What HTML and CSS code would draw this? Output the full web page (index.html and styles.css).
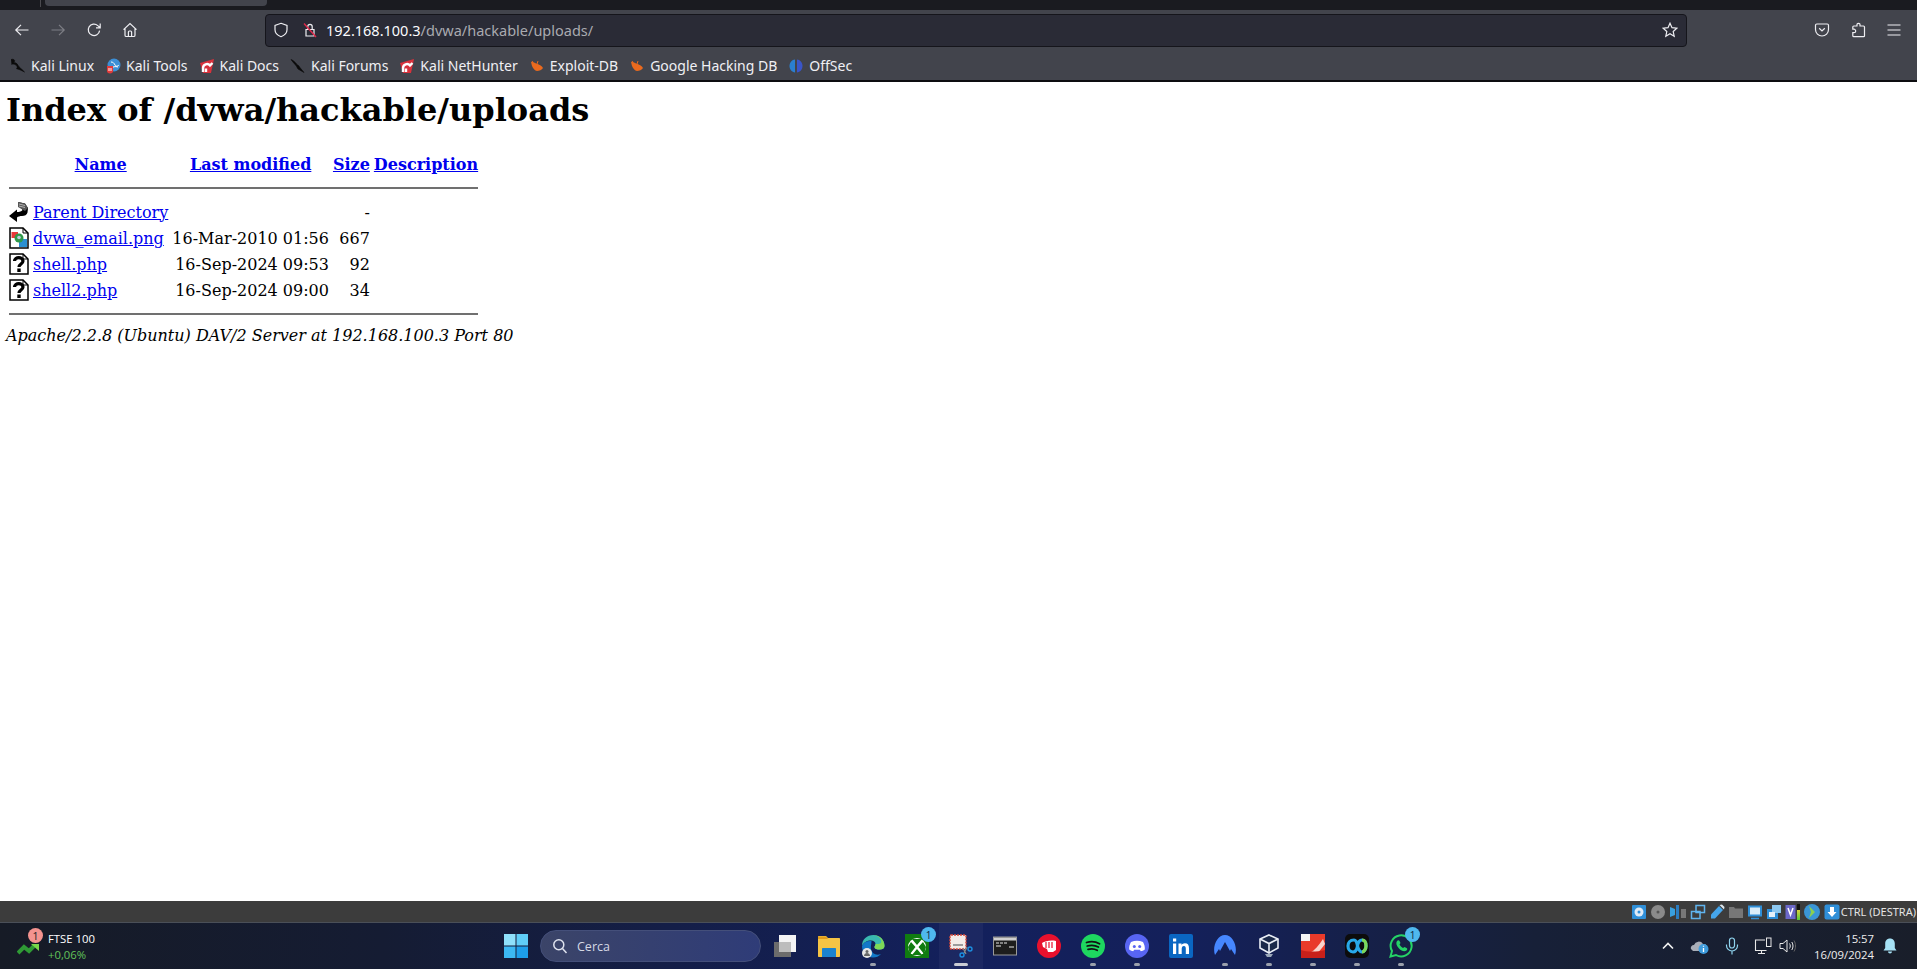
FILE: index.html
```html
<!DOCTYPE html>
<html lang="en">
<head>
  <meta charset="UTF-8" />
  <title>Index of /dvwa/hackable/uploads</title>
  <link rel="stylesheet" href="styles.css">
</head>
<body>

  <div class="tabstrip"><span class="tab-edge"></span><span class="tab"></span></div>

  <div class="toolbar">
    <button class="tool tool-back" aria-label="Back"><svg width="16" height="16" viewBox="0 0 16 16"><path d="M14.5 8H1.8M7 2.8 1.8 8 7 13.2"/></svg></button>
    <button class="tool tool-fwd" aria-label="Forward"><svg width="16" height="16" viewBox="0 0 16 16"><path d="M1.5 8h12.7M9 2.8 14.2 8 9 13.2"/></svg></button>
    <button class="tool tool-reload" aria-label="Reload"><svg width="16" height="16" viewBox="0 0 16 16"><path d="M13.6 8.6A5.7 5.7 0 1 1 11.8 3.6L14 5.6M14.2 1.6v4.2h-4.2"/></svg></button>
    <button class="tool tool-home" aria-label="Home"><svg width="16" height="16" viewBox="0 0 16 16"><path d="M1.5 7.6 8 1.6l6.5 6M3 6.6v6.6c0 .8.5 1.3 1.3 1.3h7.4c.8 0 1.3-.5 1.3-1.3V6.6M6.4 14.5V10c0-.6.4-1 1-1h1.2c.6 0 1 .4 1 1v4.5"/></svg></button>

    <div class="urlbar">
      <svg class="url-shield" width="16" height="16" viewBox="0 0 16 16"><path d="M8 1.3 14 3.4v4.4c0 3.4-3 5.8-6 6.9-3-1.1-6-3.5-6-6.9V3.4z"/></svg>
      <svg class="url-lock" width="16" height="16" viewBox="0 0 16 16"><path class="lock-body" d="M4 7.5h8V14H4zM5.8 7.5V4.6a2.2 2.2 0 0 1 4.4 0v2.9"/><path class="lock-slash" d="M2 1.500 14 15"/></svg>
      <span class="url-text"><span class="url-host">192.168.100.3</span>/dvwa/hackable/uploads/</span>
      <svg class="url-star" width="16" height="16" viewBox="0 0 16 16"><path d="M8 1.200 10 5.700l4.800.5-3.600 3.300 1 4.800L8 11.800l-4.200 2.500 1-4.800-3.600-3.300 4.800-.5z"/></svg>
    </div>

    <button class="tool tool-pocket" aria-label="Pocket"><svg width="16" height="16" viewBox="0 0 16 16"><path d="M2.800 2h10.400c.7 0 1.300.6 1.300 1.300V7.500a6.500 6.500 0 0 1-13 0V3.300C1.500 2.600 2.100 2 2.800 2zM5.200 6.300 8 9l2.800-2.700"/></svg></button>
    <button class="tool tool-ext" aria-label="Extensions"><svg width="16" height="16" viewBox="0 0 16 16"><path d="M8.500 1.300c1.200 0 1.700.9 1.500 2.200v.5h3.500c.6 0 1 .4 1 1v8.700c0 .6-.4 1-1 1H3.800c-.6 0-1-.4-1-1v-3h1c1.200 0 1.900-.7 1.900-1.500S5 7.200 3.800 7.200h-1V5c0-.6.4-1 1-1H7v-.5c-.2-1.300.3-2.200 1.500-2.200z"/></svg></button>
    <button class="tool tool-menu" aria-label="Menu"><svg width="16" height="16" viewBox="0 0 16 16"><path d="M1.500 3h13M1.500 8h13M1.500 13h13"/></svg></button>
  </div>

  <div class="bookmarks">
    <a class="bm"><svg width="16" height="16" viewBox="0 0 16 16"><path class="ic-dragon" d="M1 1.500c2.500-.8 4 .3 3.600 2L2.800 4.800c2-.6 4.200.2 5.200 2.500 1 2 3.500 3.500 6.500 6.700-3.500-1.800-6-3-8-3.300 1-.8 1-2-.3-3.400C4.800 6 3 5.800 1.500 6.500"/></svg>Kali Linux</a>
    <a class="bm"><svg width="16" height="16" viewBox="0 0 16 16"><circle cx="9" cy="7" r="6.500" fill="#3d8fd6"/><path d="M6 4c2 0 3 1 4 3s3 1 4 0M6 10c2-1 4-2 7-1" stroke="#fff" fill="none"/><path d="M2 8h6v5c0 1.500-1 2.500-3 2.500S2 14.500 2 13z" fill="#e23b3b"/><path d="M4 10v3M6 10v3" stroke="#fff"/></svg>Kali Tools</a>
    <a class="bm"><svg width="16" height="16" viewBox="0 0 16 16"><path d="M1 5 15 1l-3 14H4z" fill="#d8323c"/><path d="M4 14V10a4 4 0 0 1 7-2.600L13.500 5M7 14v-3.500" stroke="#fff" stroke-width="2.400" fill="none"/></svg>Kali Docs</a>
    <a class="bm"><svg width="16" height="16" viewBox="0 0 16 16"><path class="ic-dragon" d="M1 1.500c2.500 1 4 2.500 5.500 4.500 1.500 1.500 2.500 1.500 3 3l4.500 5.500-6-3.500C7 9.500 6.500 8 5.500 7 4 5.500 2.500 3.500 1 1.500z"/></svg>Kali Forums</a>
    <a class="bm"><svg width="16" height="16" viewBox="0 0 16 16"><path d="M1 5 15 1l-3 14H4z" fill="#d8323c"/><path d="M4 14V10a4 4 0 0 1 7-2.600L13.500 5M7 14v-3.500" stroke="#fff" stroke-width="2.400" fill="none"/></svg>Kali NetHunter</a>
    <a class="bm"><svg width="16" height="16" viewBox="0 0 16 16"><path d="M2 4c2 0 3 .5 5 1.500 3 .5 6 2.500 7 4.500-1 2-4 3-6 3S4 10 3 8z" fill="#ea6a1e"/><path d="M5 6 3 3M8 6l1-3" stroke="#ea6a1e"/></svg>Exploit-DB</a>
    <a class="bm"><svg width="16" height="16" viewBox="0 0 16 16"><path d="M2 4c2 0 3 .5 5 1.500 3 .5 6 2.500 7 4.500-1 2-4 3-6 3S4 10 3 8z" fill="#ea6a1e"/><path d="M5 6 3 3M8 6l1-3" stroke="#ea6a1e"/></svg>Google Hacking DB</a>
    <a class="bm"><svg width="16" height="16" viewBox="0 0 16 16"><path d="M7 1.500C4 1.500 1.500 4.500 1.500 8s2.500 6 5.500 6.500z" fill="#2a7fd0"/><path d="M9 1.500c3 0 5.500 3 5.500 6.500S12 14 9 14.500z" fill="#3a55c8"/></svg>OffSec</a>
  </div>

  <main class="page">
    <h1>Index of /dvwa/hackable/uploads</h1>
    <table class="listing">
      <tr>
        <th class="col-icon"><span class="blank"></span></th>
        <th><a href="#">Name</a></th>
        <th><a href="#">Last modified</a></th>
        <th><a href="#">Size</a></th>
        <th><a href="#">Description</a></th>
      </tr>
      <tr><th colspan="5"><hr></th></tr>
      <tr>
        <td class="col-icon"><svg class="file-ic" width="20" height="22" viewBox="0 0 20 22"><path d="M9 1l7 1.500 3 4.500-.5 4.500c-.5 2.500-3 3.500-5.500 3.500-2 0-4 .5-5 1.500V21L0 15 8 8.500V11c2.500 0 4.500-.5 5.500-2z" fill="#000"/><path d="M9 1l7 1.500 3 4.500-3 3-7-4z" fill="#555"/><path d="M10 3l6 1.500M10 5l6 1.500" stroke="#ccc" stroke-width=".8"/></svg></td>
        <td><a href="#">Parent Directory</a></td>
        <td class="num">&nbsp;</td>
        <td class="num">-</td>
        <td></td>
      </tr>
      <tr>
        <td class="col-icon"><svg class="file-ic" width="20" height="22" viewBox="0 0 20 22"><path d="M1 1h13l5 5v15H1z" fill="#fff" stroke="#000" stroke-width="1.500"/><path d="M14 1v5h5" fill="none" stroke="#000"/><path d="M2.500 5H9v6H2.500z" fill="#e8383a"/><path d="M10 12h8v8h-8z" fill="#2a8fd0"/><circle cx="10" cy="11" r="4.500" fill="#2f9a4a"/><circle cx="10" cy="10.500" r="1.800" fill="#bcd"/></svg></td>
        <td><a href="#">dvwa_email.png</a></td>
        <td class="num">16-Mar-2010 01:56</td>
        <td class="num">667</td>
        <td></td>
      </tr>
      <tr>
        <td class="col-icon"><svg class="file-ic" width="20" height="22" viewBox="0 0 20 22"><path d="M1 1h13l5 5v15H1z" fill="#fff" stroke="#000" stroke-width="1.500"/><path d="M14 1v5h5" fill="none" stroke="#000"/><path d="M5.500 8c0-4.500 8.500-4.500 8.500 0 0 3-4 3-4 6" fill="none" stroke="#000" stroke-width="3.200"/><path d="M8.300 15.500h3.400V19H8.300z" fill="#000"/></svg></td>
        <td><a href="#">shell.php</a></td>
        <td class="num">16-Sep-2024 09:53</td>
        <td class="num">92</td>
        <td></td>
      </tr>
      <tr>
        <td class="col-icon"><svg class="file-ic" width="20" height="22" viewBox="0 0 20 22"><path d="M1 1h13l5 5v15H1z" fill="#fff" stroke="#000" stroke-width="1.500"/><path d="M14 1v5h5" fill="none" stroke="#000"/><path d="M5.500 8c0-4.500 8.500-4.500 8.500 0 0 3-4 3-4 6" fill="none" stroke="#000" stroke-width="3.200"/><path d="M8.300 15.500h3.400V19H8.300z" fill="#000"/></svg></td>
        <td><a href="#">shell2.php</a></td>
        <td class="num">16-Sep-2024 09:00</td>
        <td class="num">34</td>
        <td></td>
      </tr>
      <tr><th colspan="5"><hr></th></tr>
    </table>
    <address>Apache/2.2.8 (Ubuntu) DAV/2 Server at 192.168.100.3 Port 80</address>
  </main>

  <div class="vbox-status">
    <svg width="16" height="16" viewBox="0 0 16 16"><rect x="1" y="1" width="14" height="14" rx="1" fill="#2f8fd8"/><circle cx="8" cy="8" r="4.500" fill="#dfeaf5"/><circle cx="8" cy="8" r="1.500" fill="#2f8fd8"/></svg>
    <svg width="16" height="16" viewBox="0 0 16 16"><circle cx="8" cy="8" r="7" fill="#8a8a8a"/><circle cx="8" cy="8" r="1.500" fill="#555"/></svg>
    <svg width="18" height="16" viewBox="0 0 18 16"><path d="M1 3l5 2v6l-5 2z" fill="#39a0e0"/><path d="M7 1h3v14H7z" fill="#2a7cc0"/><path d="M12 5h5v9h-5z" fill="#777"/></svg>
    <svg width="16" height="16" viewBox="0 0 16 16"><path d="M6 1.500h8.500v7H6zM1.500 7.500H10v7H1.500z" fill="#3c3c3c" stroke="#5fb4ee" stroke-width="1.500"/></svg>
    <svg width="16" height="16" viewBox="0 0 16 16"><path d="M10 2 14 6 6 14.500H2V10.500z" fill="#45a5ea"/><path d="M10.500 1 13 .5 15.500 3 15 5.500z" fill="#dfe8ef"/></svg>
    <svg width="16" height="16" viewBox="0 0 16 16"><path d="M1 3h5l1 1.500h8V14H1z" fill="#777"/></svg>
    <svg width="16" height="16" viewBox="0 0 16 16"><rect x="1" y="1.500" width="14" height="11" fill="#2f8fd8"/><rect x="3" y="3.500" width="10" height="7" fill="#d9ecf8"/><path d="M4 14.500h8" stroke="#2f8fd8" stroke-width="1.500"/></svg>
    <svg width="16" height="16" viewBox="0 0 16 16"><rect x="1" y="5" width="11" height="10" fill="#2f8fd8"/><rect x="6" y="1" width="9" height="8" fill="#8cc7ef"/><rect x="3" y="8" width="6" height="5" fill="#e4f1fa"/></svg>
    <span class="vt"><svg width="11" height="16" viewBox="0 0 11 16"><rect x=".5" y="1" width="10" height="14" fill="#6b68c8"/><path d="M3 4l2.500 7L8 4" stroke="#fff" stroke-width="1.500" fill="none"/></svg><span class="vt-bar"></span></span>
    <svg width="18" height="18" viewBox="0 0 18 18"><circle cx="9" cy="9" r="8" fill="#3a96d6"/><path d="M6 3l6 6-6 6 2-6z" fill="#8bd050"/></svg>
    <svg width="16" height="16" viewBox="0 0 16 16"><rect x=".5" y=".5" width="15" height="15" rx="2" fill="#2f8fd8"/><path d="M6 3h4v5h2.500L8 13 3.500 8H6z" fill="#fff"/></svg>
    <span class="vbox-key">CTRL (DESTRA)</span>
  </div>

  <footer class="taskbar">
    <div class="widget">
      <span class="widget-ic">
        <svg width="24" height="14" viewBox="0 0 24 14"><path d="M1 11 7 5l5 4 5-5" fill="none" stroke="#2f9a35" stroke-width="4"/><path d="M14 2h8v7z" fill="#7ad84a"/></svg>
        <span class="widget-badge">1</span>
      </span>
      <span class="widget-text"><span class="widget-name">FTSE 100</span><span class="widget-delta">+0,06%</span></span>
    </div>

    <div class="task-apps">
      <span class="app"><svg width="24" height="24" viewBox="0 0 24 24"><path d="M0 0h11.500v11.500H0z" fill="#8fe0fb"/><path d="M12.500 0H24v11.500H12.500z" fill="#5fcdf8"/><path d="M0 12.500h11.500V24H0z" fill="#3cb8f3"/><path d="M12.500 12.500H24V24H12.500z" fill="#1d9eea"/></svg></span>

      <div class="search">
        <svg width="16" height="16" viewBox="0 0 16 16"><circle cx="6.800" cy="6.800" r="5" fill="none" stroke="#dfe3ef" stroke-width="1.500"/><path d="m10.500 10.500 4 4.500" stroke="#dfe3ef" stroke-width="1.500"/></svg>
        <span>Cerca</span>
      </div>

      <span class="app"><svg width="24" height="24" viewBox="0 0 24 24"><rect x="1" y="8" width="17" height="15" fill="#6c6c6c"/><rect x="6" y="1" width="17" height="17" fill="#f4f4f4"/><rect x="6" y="8" width="12" height="10" fill="#bdbdbd"/></svg></span>
      <span class="app"><svg width="24" height="24" viewBox="0 0 24 24"><path d="M1 3c0-.7.4-1 1-1h7l2 2h11c.7 0 1 .4 1 1v17c0 .6-.4 1-1 1H2c-.6 0-1-.4-1-1z" fill="#f5c445"/><path d="M1 2.500h8l2 2.500H1z" fill="#e19c1a"/><path d="M6 14h12c.6 0 1 .4 1 1v8H5v-8c0-.6.4-1 1-1z" fill="#1a82cf"/></svg></span>
      <span class="app is-open"><svg width="24" height="24" viewBox="0 0 24 24"><path d="M1 12C1 5 6 1 12.500 1 19 1 23.500 6 23.500 12c0 2.500-2 3.500-4.500 3.500-3 0-5.500-.5-5.500-2.500 0-1 1-1.500 1-3 0-2-2-3.500-4.500-3.500C6 6.500 2.500 8.500 1 12z" fill="#39b8b0"/><path d="M23.500 12c0-6-4.500-11-11-11 6 1 9 5 7.500 8-1 1-3 1-5.500 1 0 1.500-1 2-1 3 0 2 2.500 2.500 5.500 2.500 2.500 0 4.500-1 4.500-3.500z" fill="#7ed957"/><path d="M1 12c0 7 5 11.500 11 11.500 3 0 6-1 8-3.500-5 2-9-.5-10-5-.5-3 .5-5 .5-8C6 6.500 2.500 8.500 1 12z" fill="#1278c8"/><circle cx="6" cy="19" r="5" fill="#e6e6e6"/><circle cx="6" cy="17.500" r="1.500" fill="#666"/><path d="M3 22c0-2 1.500-3 3-3s3 1 3 3z" fill="#666"/></svg></span>
      <span class="app"><svg width="24" height="24" viewBox="0 0 24 24"><rect width="24" height="24" fill="#107c10"/><circle cx="12" cy="13" r="9" fill="#fff"/><path d="M12 11 7 5h10zM10.500 13 5 20l-2-7 3-5zM13.500 13 19 20l2-7-3-5zM12 15l-5 6h10z" fill="#107c10"/></svg><span class="app-badge">1</span></span>
      <span class="app is-active"><svg width="24" height="24" viewBox="0 0 24 24"><rect x="1" y="1" width="16" height="14" rx="1" fill="#f2ece8" stroke="#d84a3a" stroke-width="1.500" stroke-dasharray="2 1"/><rect x="4" y="10" width="10" height="2" fill="#9b9b9b"/><path d="M14 14l3 6M18 13l-3 6" stroke="#888" stroke-width="1.200"/><circle cx="13" cy="21" r="2" fill="none" stroke="#1c8fe0" stroke-width="1.400"/><circle cx="21" cy="15" r="2" fill="none" stroke="#1c8fe0" stroke-width="1.400"/></svg></span>
      <span class="app"><svg width="24" height="24" viewBox="0 0 24 24"><rect x=".5" y="3" width="23" height="18" fill="#1d1d1d" stroke="#9a9a9a"/><rect x="1" y="3.500" width="22" height="3" fill="#cfcfcf"/><path d="M3 9h3M7 9h3M11 9h3M3 12h5M16 13h5" stroke="#e8e8e8"/></svg></span>
      <span class="app"><svg width="24" height="24" viewBox="0 0 24 24"><circle cx="12" cy="12" r="12" fill="#e8112d"/><path d="M5 9c3-2 9-3 14-2v9l-3 2h-5l-1-3-4-2z" fill="#fff"/><path d="M9 8v6M12 8v6M15 8v6" stroke="#e8112d" stroke-width="1.200"/></svg></span>
      <span class="app is-open"><svg width="24" height="24" viewBox="0 0 24 24"><circle cx="12" cy="12" r="12" fill="#1ed760"/><path d="M5.500 8.500c4-1.200 9-1 13 1.200M6.200 12c3.500-1 8-.8 11.200 1.100M7 15.300c3-.8 6.500-.6 9.200.9" fill="none" stroke="#111" stroke-width="1.800" stroke-linecap="round"/></svg></span>
      <span class="app is-open"><svg width="24" height="24" viewBox="0 0 24 24"><circle cx="12" cy="12" r="12" fill="#5865f2"/><path d="M6 8c4-1.800 8-1.800 12 0 1.500 2.500 2 5 1.800 7.500-1.500 1-2.800 1.500-4 1.800l-1-1.500h-5.600l-1 1.500c-1.200-.3-2.500-.8-4-1.800C4 13 4.500 10.500 6 8z" fill="#fff"/><circle cx="9.300" cy="12.500" r="1.500" fill="#5865f2"/><circle cx="14.700" cy="12.500" r="1.500" fill="#5865f2"/></svg></span>
      <span class="app"><svg width="24" height="24" viewBox="0 0 24 24"><rect width="24" height="24" rx="2" fill="#0a66c2"/><path d="M4 9.500h3.200V20H4zM4 4.500h3.200v3H4zM9.500 9.500h3v1.500c.6-1 1.800-1.800 3.400-1.800 3 0 4.100 1.900 4.100 5V20h-3.200v-5.200c0-1.500-.4-2.800-1.900-2.800s-2.200 1.200-2.200 2.800V20H9.500z" fill="#fff"/></svg></span>
      <span class="app is-open"><svg width="24" height="24" viewBox="0 0 24 24"><path d="M2 21C-1 13 4 1 12 1s13 12 10 20l-4-6-1 2-5-9-5 9-1-2z" fill="#4687ff"/></svg></span>
      <span class="app is-open"><svg width="24" height="24" viewBox="0 0 24 24"><path d="M12 1l9 4v9l-9 5-9-5V5z" fill="#1b2a4a" stroke="#e9eef5" stroke-width="1.600"/><path d="M3 5l9 4.500L21 5M12 9.500V19" stroke="#e9eef5" stroke-width="1.600" fill="none"/><path d="M8 20h8l-2 3h-4z" fill="#9aa7b8"/></svg></span>
      <span class="app is-open"><svg width="24" height="24" viewBox="0 0 24 24"><path d="M0 0h24v24H0z" fill="#e93a2a"/><path d="M0 0h9v7H0z" fill="#f4f4f4"/><path d="M10 18c3-1 8-7 12-13l2 5c-3 4-6 8-9 10z" fill="#f8d4cc"/><path d="M0 16c6 2 16 2 24 0v8H0z" fill="#c8201a"/></svg></span>
      <span class="app is-open"><svg width="24" height="24" viewBox="0 0 24 24"><rect width="24" height="24" rx="5" fill="#0c0c0c"/><path d="M9 6C5 6 3 9 3 12s2 6 5 6 4-3 4.500-6S14 6 17 6c3 0 4 3 4 6s-2 6-4 6-4-3-4.500-6C12 9 11 6 9 6z" fill="none" stroke="#28a8e8" stroke-width="3.200"/><path d="M17 6c3 0 4 3 4 6s-2 6-4 6" fill="none" stroke="#7ed957" stroke-width="3.200"/></svg></span>
      <span class="app is-open"><svg width="24" height="24" viewBox="0 0 24 24"><path d="M1.500 22.500 3 17A10.500 10.500 0 1 1 7 21z" fill="none" stroke="#25d366" stroke-width="2"/><path d="M8 7c1-1 2-1 2.500 0l1 2-1 1.500c.8 1.500 2 2.700 3.500 3.500l1.500-1 2 1c1 .5 1 1.500 0 2.500-2 1.500-5 .5-7.500-2S6.500 9 8 7z" fill="#25d366"/></svg><span class="app-badge">1</span></span>
    </div>

    <div class="tray">
      <svg class="tray-chevron" width="14" height="14" viewBox="0 0 14 14"><path d="M2 9.500 7 4.500l5 5"/></svg>
      <svg class="tray-cloud" width="20" height="16" viewBox="0 0 20 16"><path d="M1 11a3 3 0 0 1 3-4 5 5 0 0 1 9-1 4 4 0 0 1 3 7H3z" fill="#a9aeb8"/><circle cx="13.500" cy="11" r="5" fill="#3f9cdc"/><path d="M13.500 10v4M13.500 7.800v1" stroke="#fff" stroke-width="1.300"/></svg>
      <svg class="tray-mic" width="16" height="18" viewBox="0 0 16 18"><path d="M5.500 3.500a2.500 2.500 0 0 1 5 0v5a2.500 2.500 0 0 1-5 0zM2.500 7.500v1a5.500 5.500 0 0 0 11 0v-1M8 14v3.500" fill="none" stroke="#8fd4ee" stroke-width="1.200"/></svg>
      <svg class="tray-net" width="18" height="18" viewBox="0 0 18 18"><path d="M11 3H1.500v10.500h11M4 16.500h7M7.500 13.500v3" fill="none" stroke="#e8e8e8" stroke-width="1.100"/><rect x="12.500" y="1" width="4.500" height="8.500" fill="none" stroke="#e8e8e8"/></svg>
      <svg class="tray-vol" width="18" height="16" viewBox="0 0 18 16"><path d="M1 5.500h3L8 2v12L4 10.500H1zM10.500 5.500c1 1.500 1 3.500 0 5M12.800 4c1.600 2.500 1.600 5.500 0 8" fill="none" stroke="#e8e8e8"/><path d="M15 2.500c2 3.500 2 7.500 0 11" fill="none" stroke="#666"/></svg>
      <div class="clock"><span>15:57</span><span>16/09/2024</span></div>
      <svg class="tray-bell" width="16" height="16" viewBox="0 0 16 16"><path d="M8 .5c3 0 4.800 2.200 4.800 5V10l1.700 2.500h-13L3.200 10V5.500C3.200 2.700 5 .5 8 .5zM6 13.500h4c0 2.500-4 2.500-4 0z" fill="#a6e1f5"/></svg>
    </div>
  </footer>

</body>
</html>
```

FILE: styles.css
```css
* {
  box-sizing: border-box;
}

html, body {
  height: 100%;
}

body {
  margin: 0;
  display: flex;
  flex-direction: column;
  overflow: hidden;
  background: #fff;
  font-family: "Noto Sans", sans-serif;
}

/* browser chrome */
.tabstrip {
  height: 10px;
  flex: none;
  display: flex;
  background: #1a1b20;
}

.tab-edge {
  width: 1px;
  height: 7px;
  margin-left: 40px;
  background: #4a4a4f;
}

.tab {
  width: 222px;
  height: 6px;
  margin-left: 4px;
  background: #42444c;
  border-radius: 0 0 4px 4px;
}

.toolbar {
  height: 40px;
  flex: none;
  display: flex;
  align-items: center;
  padding-left: 4px;
  background: #42444c;
}

.tool {
  width: 36px;
  height: 32px;
  padding: 0;
  flex: none;
  display: flex;
  align-items: center;
  justify-content: center;
  background: none;
  border: none;
}

.tool svg, .url-shield, .lock-body, .url-star {
  fill: none;
  stroke: #eeeef2;
  stroke-width: 1.2;
}

.tool-fwd svg {
  stroke: #7d7e85;
}

.urlbar {
  width: 1422px;
  height: 33px;
  margin: 0 117px;
  flex: none;
  display: flex;
  align-items: center;
  padding: 0 8px 0 7px;
  background: #2a2b36;
  border: 1px solid #15151b;
  border-radius: 4px;
}

.url-lock {
  margin-left: 13px;
  fill: none;
}

.lock-slash {
  stroke: #e0294a;
  stroke-width: 1.4;
}

.url-text {
  margin-left: 8px;
  flex: 1;
  font-size: 14.5px;
  color: #a9aab0;
}

.url-host {
  color: #fbfbfe;
}

.bookmarks {
  height: 32px;
  flex: none;
  display: flex;
  align-items: center;
  gap: 11px;
  padding: 1px 0 0 10px;
  background: #42444c;
  border-bottom: 2px solid #0d0d10;
}

.bm {
  display: flex;
  align-items: center;
  gap: 5px;
  font-size: 14px;
  color: #f0f0f4;
}

.ic-dragon {
  fill: #0a0a0a;
  stroke: #0a0a0a;
  stroke-width: .6;
}

/* apache listing */
.page {
  flex: 1;
  padding: 9px 6px 0;
  background: #fff;
  color: #000;
  font-family: "DejaVu Serif", serif;
  font-size: 16px;
}

h1 {
  margin: 0 0 21px;
  font-size: 32px;
}

.listing td, .listing th {
  padding: 1px;
}

.col-icon {
  vertical-align: top;
  line-height: 0;
}

.blank {
  display: block;
  width: 20px;
  height: 22px;
}

.listing hr {
  height: 2px;
  border: none;
  background: #707070;
}

.num {
  text-align: right;
}

.page a {
  color: #0000ee;
}

/* virtualbox status bar */
.vbox-status {
  height: 22px;
  flex: none;
  display: flex;
  align-items: center;
  justify-content: flex-end;
  gap: 3px;
  padding-right: 1px;
  background: #3c3c3c;
  border-bottom: 1px solid #4a4f58;
}

.vt {
  display: flex;
  align-items: center;
  gap: 1px;
}

.vt-bar {
  width: 3px;
  height: 16px;
  background: linear-gradient(#111 40%, #d6d23a 40%, #50c83a);
}

.vbox-key {
  margin-left: -2px;
  font-size: 11px;
  color: #e4e4e4;
}

/* windows taskbar */
.taskbar {
  height: 46px;
  flex: none;
  display: flex;
  align-items: center;
  background: linear-gradient(90deg, #161b26 0, #151c33 20%, #13205c 50%, #14205a 62%, #172038 80%, #191e2a 100%);
  font-family: "Open Sans", sans-serif;
  color: #fff;
}

.widget {
  width: 494px;
  flex: none;
  display: flex;
  align-items: center;
  gap: 7px;
  padding-left: 17px;
}

.widget-ic {
  position: relative;
  display: flex;
  padding-top: 6px;
}

.widget-badge {
  position: absolute;
  top: -8px;
  left: 11px;
  width: 15px;
  height: 15px;
  display: flex;
  align-items: center;
  justify-content: center;
  background: #f4938f;
  border-radius: 50%;
  font-size: 10.5px;
  color: #222;
}

.widget-text {
  display: flex;
  flex-direction: column;
  gap: 1px;
  font-size: 11.3px;
  line-height: 15px;
}

.widget-delta {
  color: #62c45a;
}

.task-apps {
  display: flex;
  align-items: center;
}

.app {
  position: relative;
  width: 44px;
  height: 46px;
  flex: none;
  display: flex;
  align-items: center;
  justify-content: center;
}

.is-open::after, .is-active::after {
  content: "";
  position: absolute;
  bottom: 3px;
  left: 19px;
  width: 6px;
  height: 3px;
  border-radius: 2px;
  background: #9aa0ac;
}

.is-active {
  background: rgba(255, 255, 255, .04);
}

.is-active::after {
  left: 15px;
  width: 14px;
  background: #c9ccd4;
}

.app-badge {
  position: absolute;
  top: 4px;
  right: 3px;
  width: 15px;
  height: 15px;
  display: flex;
  align-items: center;
  justify-content: center;
  background: #4fb8ee;
  border-radius: 50%;
  font-size: 10px;
  color: #10223c;
}

.search {
  width: 221px;
  height: 32px;
  margin: 0 2px;
  flex: none;
  display: flex;
  align-items: center;
  gap: 9px;
  padding-left: 11px;
  background: linear-gradient(90deg, #3b4468, #2f3c78);
  border: 1px solid #444f7a;
  border-radius: 16px;
  font-size: 12.5px;
  color: #d5d8e4;
}

.tray {
  flex: 1;
  display: flex;
  align-items: center;
  margin-left: 238px;
}

.tray-chevron {
  fill: none;
  stroke: #f2f2f2;
  stroke-width: 1.6;
}

.tray-cloud {
  margin-left: 15px;
}

.tray-mic {
  margin-left: 14px;
}

.tray-net {
  margin-left: 14px;
}

.tray-vol {
  margin-left: 7px;
}

.clock {
  width: 75px;
  margin-left: 2px;
  display: flex;
  flex-direction: column;
  gap: 1px;
  text-align: right;
  font-size: 11.3px;
  line-height: 15px;
  color: #eee;
}

.tray-bell {
  margin-left: 8px;
}
```
